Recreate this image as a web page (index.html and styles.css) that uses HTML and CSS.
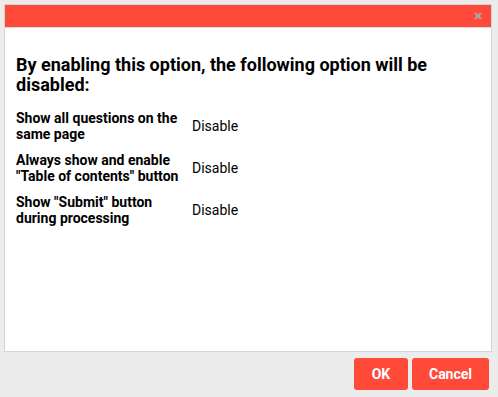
FILE: index.html
```html
<!DOCTYPE html>
<html>
<head>
<meta charset="utf-8">
<link rel="stylesheet" href="styles.css">
</head>
<body>
<div class="dialog">
  <div class="header"><svg class="close" width="8" height="8" viewBox="0 0 8 8"><path d="M1 1L7 7M7 1L1 7" stroke="#a8a8a8" stroke-width="2"/></svg></div>
  <div class="content">
    <h1 class="title">By enabling this option, the following option will be disabled:</h1>
    <div class="rows">
      <div class="row"><div class="label">Show all questions on the same page</div><div class="value">Disable</div></div>
      <div class="row"><div class="label">Always show and enable "Table of contents" button</div><div class="value">Disable</div></div>
      <div class="row"><div class="label">Show "Submit" button during processing</div><div class="value">Disable</div></div>
    </div>
  </div>
</div>
<div class="footer">
  <button class="btn ok">OK</button>
  <button class="btn cancel">Cancel</button>
</div>
</body>
</html>
```
FILE: styles.css
```css
html, body {
  margin: 0;
  padding: 0;
  background: #ececec;
  font-family: Roboto, "Liberation Sans", sans-serif;
  width: 498px;
  height: 397px;
  overflow: hidden;
}
.dialog {
  margin: 4px 0 0 4px;
  width: 486px;
  height: 346px;
  border: 1px solid #d6d6d6;
  background: #fff;
  display: flex;
  flex-direction: column;
}
.header {
  height: 22px;
  background: #ff4a3a;
  border-bottom: 1px solid #dcdcdc;
  display: flex;
  justify-content: flex-end;
  align-items: center;
  padding-right: 9px;
}
.close {
  display: block;
}
.content {
  padding: 27px 11px 0 11px;
}
.title {
  margin: 0 0 15px 0;
  font-size: 18px;
  line-height: 20px;
  font-weight: 700;
  color: #000;
}
.rows {
  display: flex;
  flex-direction: column;
  gap: 10px;
}
.row {
  display: flex;
  align-items: center;
}
.label {
  width: 176px;
  font-size: 14px;
  line-height: 16px;
  font-weight: 700;
  color: #000;
}
.value {
  font-size: 14px;
  color: #000;
}
.footer {
  display: flex;
  justify-content: flex-end;
  gap: 4px;
  padding: 6px 9px 0 0;
}
.btn {
  border: none;
  border-radius: 3px;
  background: #ff4a3a;
  color: #fff;
  font-family: Roboto, "Liberation Sans", sans-serif;
  font-weight: 700;
  font-size: 14px;
  height: 32px;
  padding: 0;
}
.ok { width: 54px; }
.cancel { width: 77px; }
```
